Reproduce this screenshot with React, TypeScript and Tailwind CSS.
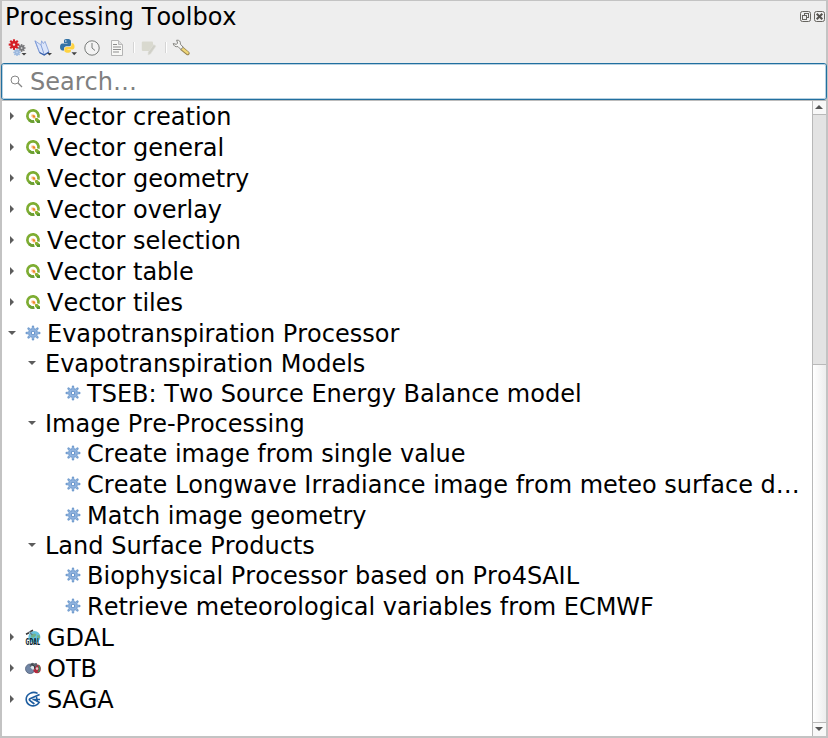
import React from "react";

type IconName = "qgis" | "gear" | "gdal" | "otb" | "saga";
type Row = { text: string; level: number; open?: boolean; leaf?: boolean; icon?: IconName };

const rows: Row[] = [
  { text: "Vector creation", level: 0, icon: "qgis" },
  { text: "Vector general", level: 0, icon: "qgis" },
  { text: "Vector geometry", level: 0, icon: "qgis" },
  { text: "Vector overlay", level: 0, icon: "qgis" },
  { text: "Vector selection", level: 0, icon: "qgis" },
  { text: "Vector table", level: 0, icon: "qgis" },
  { text: "Vector tiles", level: 0, icon: "qgis" },
  { text: "Evapotranspiration Processor", level: 0, open: true, icon: "gear" },
  { text: "Evapotranspiration Models", level: 1, open: true },
  { text: "TSEB: Two Source Energy Balance model", level: 2, leaf: true, icon: "gear" },
  { text: "Image Pre-Processing", level: 1, open: true },
  { text: "Create image from single value", level: 2, leaf: true, icon: "gear" },
  { text: "Create Longwave Irradiance image from meteo surface d…", level: 2, leaf: true, icon: "gear" },
  { text: "Match image geometry", level: 2, leaf: true, icon: "gear" },
  { text: "Land Surface Products", level: 1, open: true },
  { text: "Biophysical Processor based on Pro4SAIL", level: 2, leaf: true, icon: "gear" },
  { text: "Retrieve meteorological variables from ECMWF", level: 2, leaf: true, icon: "gear" },
  { text: "GDAL", level: 0, icon: "gdal" },
  { text: "OTB", level: 0, icon: "otb" },
  { text: "SAGA", level: 0, icon: "saga" },
];

const spokes = [0, 45, 90, 135];

function Cog({ cx, cy, r, color, hole }: { cx: number; cy: number; r: number; color: string; hole: string }) {
  return (
    <g transform={`translate(${cx} ${cy})`}>
      {spokes.map((a) => (
        <line key={a} x1={0} x2={0} y1={-r} y2={r} stroke={color} strokeWidth={r * 0.4} transform={`rotate(${a})`} />
      ))}
      <circle r={r * 0.68} fill={color} />
      <circle r={r * 0.22} fill={hole} />
    </g>
  );
}

function GearIcon() {
  return (
    <svg width="16" height="16" viewBox="0 0 16 16">
      {spokes.map((a) => (
        <line key={a} x1="8" x2="8" y1="1.7" y2="14.3" stroke="#6f9acd" strokeWidth="2.4" strokeLinecap="round" transform={`rotate(${a} 8 8)`} />
      ))}
      <circle cx="8" cy="8" r="4.9" fill="#7ba3d4" />
      {spokes.map((a) => (
        <line key={a} x1="8" x2="8" y1="1.8" y2="14.2" stroke="#94b6df" strokeWidth="1" transform={`rotate(${a} 8 8)`} />
      ))}
      <circle cx="8" cy="8" r="3.6" fill="#8fb2de" />
      <circle cx="8" cy="8" r="2.1" fill="#5d8cc4" />
      <circle cx="8" cy="8" r="1.2" fill="#fff" />
    </svg>
  );
}

function QgisIcon() {
  return (
    <svg width="16" height="16" viewBox="0 0 16 16">
      <path d="M9.2 13.4 A5.6 5.6 0 1 1 13.3 9.6" fill="none" stroke="#7ead32" strokeWidth="2.7" />
      <path d="M9.2 13.4 A5.6 5.6 0 0 1 4.2 12" fill="none" stroke="#6a9f32" strokeWidth="2.7" />
      <path d="M10 10 H12.3 L15 12.6 V15 H12.6 L10 12.4 Z" fill="#86b02c" />
      <path d="M12.6 12.4 L15 12.6 V15 H12.6 L11.4 13.8 Z" fill="#589632" />
      <path d="M6.4 6.4 H9 L10.6 8 V10.4 H8.4 L6.4 8.6 Z" fill="#f9c48a" />
      <path d="M7.4 7.2 H9.2 L10 8 V9.4 H8.4 Z" fill="#ee8523" />
    </svg>
  );
}

function GdalIcon() {
  return (
    <svg width="16" height="16" viewBox="0 0 16 16" className="overflow-visible">
      <circle cx="9.4" cy="8" r="6" fill="#66c1dc" />
      <path d="M6.4 5.4 L10 4.4 L11.4 6 L9 8.6 L5.8 8.4 Z M12.4 6 L15 6.6 L15 9 L12 9 Z" fill="#72b38a" />
      <path d="M1 5.2 L4 3.8 M5.2 2.6 L8 1.2" stroke="#333" strokeWidth="1.6" />
      <path d="M4 2.4 L6 4.6 L7.4 6" stroke="#677580" strokeWidth="1.2" fill="none" />
      <text x="0.6" y="15.6" fontSize="8.4" fontWeight="700" fontFamily="DejaVu Sans Condensed, DejaVu Sans, sans-serif" textLength="14.4" lengthAdjust="spacingAndGlyphs" fill="#08202b">GDAL</text>
    </svg>
  );
}

function OtbIcon() {
  return (
    <svg width="16" height="16" viewBox="0 0 16 16">
      <ellipse cx="5.2" cy="8.8" rx="4.7" ry="4.8" fill="#7186a6" stroke="#526078" strokeWidth="0.8" />
      <ellipse cx="12" cy="8.8" rx="3.8" ry="4.4" fill="#b3293e" />
      <path d="M13 4.8 Q16 6.4 15.4 9.6 Q14.6 12.5 12.4 12.6 L14 9 Z" fill="#3a8e62" />
      <path d="M4.5 5.6 Q7 1 9.2 3.6 Q12.5 1.6 12.2 5.4 L10 7.2 L6 7.5 Z" fill="#5b626b" />
      <path d="M5.4 7.4 Q7.7 4 9.4 6.9 V9.6 H7.3 Z" fill="#dde6ec" />
      <path d="M6.4 4.2 L9.5 6.5 L10 9.4" stroke="#252b32" strokeWidth="1" fill="none" />
      <circle cx="12" cy="8.6" r="1.3" fill="#eac4c6" />
    </svg>
  );
}

function SagaIcon() {
  return (
    <svg width="16" height="16" viewBox="0 0 16 16" fill="none" stroke="#1c5c9f">
      <path d="M12.6 2.4 C7.6 -.2 1.2 3 1.2 8.2 C1.2 11 2.6 13 5 14.2" strokeWidth="1.6" />
      <path d="M14.6 3.4 L5 7.8 C4 8.4 4.2 9 5 9.6 L9.4 13" strokeWidth="1.7" />
      <path d="M7.4 8.4 H15 M11.4 5.6 L12.6 10.8" strokeWidth="1.5" />
      <path d="M5 14.2 C8.6 15.8 12.4 14.4 14.2 11.4 L9 8.6" strokeWidth="1.6" />
    </svg>
  );
}

function TreeIcon({ name }: { name: IconName }) {
  if (name === "qgis") return <QgisIcon />;
  if (name === "gear") return <GearIcon />;
  if (name === "gdal") return <GdalIcon />;
  if (name === "otb") return <OtbIcon />;
  return <SagaIcon />;
}

function Arrow({ open }: { open?: boolean }) {
  return (
    <svg width="8" height="8" viewBox="0 0 8 8" className="shrink-0">
      <path d={open ? "M0 2 H8 L4 6 Z" : "M2 0 V8 L6 4 Z"} fill="#5c5c5c" />
    </svg>
  );
}

function TreeRow({ row }: { row: Row }) {
  const indent = row.level === 0 ? "pl-[6px]" : row.level === 1 ? "pl-[26px]" : "pl-[46px]";
  return (
    <div className={`flex shrink-0 items-center pb-px ${row.icon ? "h-[31px]" : "h-[29px]"} ${indent}`}>
      <span className="flex w-[8px] shrink-0">{!row.leaf && <Arrow open={row.open} />}</span>
      {row.icon ? (
        <span className="ml-[9px] mr-[6px] flex w-[16px] shrink-0"><TreeIcon name={row.icon} /></span>
      ) : (
        <span className="w-[9px] shrink-0" />
      )}
      <span className="whitespace-nowrap pt-0.5 leading-[28px]">{row.text}</span>
    </div>
  );
}

export default function App() {
  return (
    <div className="flex h-[738px] w-[828px] flex-col border-t border-r-2 border-b-2 border-l-2 border-[#c3c3c3] bg-[#eeeeee] font-['DejaVu_Sans',sans-serif] text-[24px] text-black [font-kerning:none]">
      <header className="flex h-[32px] shrink-0 items-center justify-between pl-[3px]">
        <h1 className="leading-[28px]">Processing Toolbox</h1>
        <div className="flex gap-[3px] pb-px pr-[1px]">
          <svg width="11" height="11" viewBox="0 0 11 11" fill="none" stroke="#66645f">
            <rect x=".5" y=".5" width="10" height="10" rx="2" />
            <rect x="4.5" y="2.5" width="4" height="4" />
            <rect x="2.5" y="4.5" width="4" height="4" fill="#eee" />
          </svg>
          <svg width="11" height="11" viewBox="0 0 11 11" fill="none" stroke="#66645f">
            <rect x=".5" y=".5" width="10" height="10" rx="2" />
            <path d="M2.7 2.7 L8.3 8.3 M8.3 2.7 L2.7 8.3" stroke="#55534f" strokeWidth="2" />
          </svg>
        </div>
      </header>

      <div className="flex h-[30px] shrink-0 items-center pb-px pl-[6px]">
        <svg width="19" height="18" viewBox="0 0 19 18">
          <Cog cx={13.6} cy={9} r={3.9} color="#77777a" hole="#eee" />
          <Cog cx={9} cy={13.4} r={3.7} color="#9cb9df" hole="#c4d5ec" />
          <Cog cx={6} cy={5.6} r={5.3} color="#d51f25" hole="#eee" />
          <path d="M13.5 14 H18.5 L16 16.5 Z" fill="#444" />
        </svg>
        <svg width="18" height="18" viewBox="0 0 18 18" className="ml-[7px]">
          <path d="M1 1.8 L7 6 L7.6 1.8 L9.4 4.6 L11 2.4 L15 13 L10.2 16 L5.5 13.5 Z" fill="#dbe5fa" stroke="#8ba5da" strokeWidth=".9" />
          <path d="M1 1.8 L5.5 13.5 M7 6 L10 15" stroke="#7d9ad6" strokeWidth=".9" />
          <path d="M5.5 13.5 L10.2 16 L15 13" stroke="#3961ac" strokeWidth="1.4" fill="none" />
          <path d="M13 14 H18 L15.5 16.5 Z" fill="#444" />
        </svg>
        <svg width="17" height="17" viewBox="0 0 17 17" className="ml-[8px]">
          <path d="M7.2 0 C3.8 0 4 1.4 4 2.8 V4 H7.5 V4.6 H2.5 C.7 4.6 0 6.4 0 8 C0 10 1 11.5 2.6 11.5 H4 V9.6 C4 8.2 5 7.2 6.4 7.2 H9.5 C10.6 7.2 11 6.2 11 5.2 V2.7 C11 .5 9.2 0 7.2 0Z" fill="#3573a6" />
          <path d="M11.5 4 V6 C11.5 7.3 10.5 8.1 9.2 8.1 H6.5 C5.2 8.1 4.4 9 4.4 10 V12 C4.4 14.2 11 14.6 11 12 V11 H7.5 V10.4 H12.6 C14.3 10.4 14.8 8.5 14.4 6.5 C14.1 4.8 13.1 4 11.5 4Z" fill="#ffd342" />
          <circle cx="5.8" cy="2" r=".7" fill="#fff" />
          <path d="M11.5 13.2 H17 L14.2 16.2 Z" fill="#444" />
        </svg>
        <svg width="16" height="16" viewBox="0 0 16 16" className="ml-[7px]" fill="none" stroke="#777a78">
          <circle cx="8" cy="8" r="7.2" fill="#f3f3f3" />
          <path d="M8 3 V8 L11 10.5" />
        </svg>
        <svg width="14" height="16" viewBox="0 0 14 16" className="ml-[10px]">
          <path d="M1.5 .5 H8.5 L12.5 4.5 V15.5 H1.5 Z" fill="#f8f8f6" stroke="#b4b4b4" />
          <path d="M8.5 .5 V4.5 H12.5" fill="#ddd" stroke="#bbb" />
          <path d="M3 4.5 H7 M3 7 H11 M3 9.5 H11 M3 12 H9" stroke="#8d8d8d" />
        </svg>
        <span className="ml-[9px] h-[11px] w-[2px] border-r border-white bg-[#d5d5d5]" />
        <svg width="16" height="16" viewBox="0 0 16 16" className="ml-[6px]">
          <path d="M2 1.5 H11 Q12 1.5 12 2.5 V9 Q12 11 9.5 11 H2 Q.8 11 .8 10 V2.8 Q.8 1.5 2 1.5Z" fill="#d9d9cf" />
          <path d="M12.7 4.5 L15 6 L9.5 14 L7 15 L7.2 12.3 Z" fill="#d0d0c8" stroke="#e3e3dc" strokeWidth=".6" />
        </svg>
        <span className="ml-[8px] h-[11px] w-[2px] border-r border-white bg-[#d5d5d5]" />
        <svg width="18" height="18" viewBox="0 0 18 18" className="ml-[5px]">
          <path d="M10 9.6 L15.6 14.2" stroke="#978451" strokeWidth="4" strokeLinecap="round" />
          <path d="M10.2 9.6 L15.5 13.9" stroke="#f0d778" strokeWidth="2.4" strokeLinecap="round" />
          <path d="M4.6 1.2 Q8.8 .8 8.4 5.2 L11.2 8.2 L8.8 10.4 L6 7.6 Q2.1 8.4 1.2 4.5 L4.4 5.4 L5.6 4 Z" fill="#f4f4f2" stroke="#858581" strokeWidth="1" />
        </svg>
      </div>

      <div className="-mx-px flex h-[37px] shrink-0 items-center rounded-[3px] border border-[#216f9f] bg-white pb-px pl-[8px] outline outline-1 -outline-offset-2 outline-[#b7d1e1]">
        <svg width="13" height="13" viewBox="0 0 13 13" fill="none" stroke="#858585">
          <circle cx="5" cy="5" r="4" />
          <path d="M8 8 L12 12" strokeWidth="1.3" />
        </svg>
        <span className="ml-[7px] pt-0.5 leading-[28px] text-[#808080]">Search…</span>
      </div>

      <main className="flex min-h-0 flex-1 border-t border-[#bcbcbc] bg-white">
        <div className="flex min-w-0 flex-1 flex-col overflow-hidden">
          {rows.map((row) => <TreeRow key={row.text} row={row} />)}
        </div>
        <div className="flex w-[14px] shrink-0 flex-col border-l border-[#b8b8b8] bg-linear-to-r from-white to-[#ededed]">
          <div className="flex h-[13px] shrink-0 items-center justify-center bg-[#f8f8f8] pb-px pr-px">
            <svg width="8" height="4" viewBox="0 0 8 4"><path d="M0 4 L4 0 L8 4Z" fill="#555" /></svg>
          </div>
          <div className="h-[251px] shrink-0 border-y border-[#b9b9b9] bg-[#e3e3e3]" />
          <div className="flex-1" />
          <div className="flex h-[14px] shrink-0 items-center justify-center border-t border-[#b8b8b8] bg-[#f8f8f8] pb-px pr-px">
            <svg width="8" height="4" viewBox="0 0 8 4"><path d="M0 0 H8 L4 4Z" fill="#555" /></svg>
          </div>
        </div>
      </main>
    </div>
  );
}
